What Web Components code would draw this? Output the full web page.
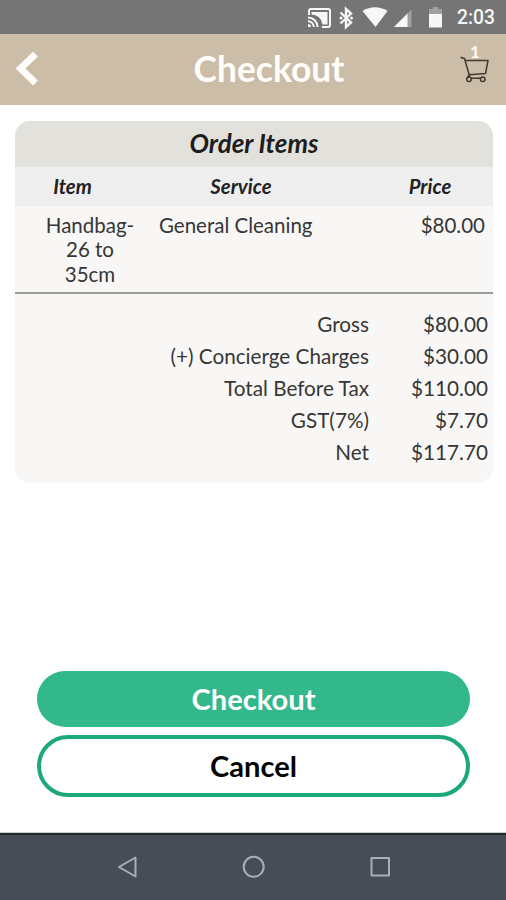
<!DOCTYPE html>
<html lang="en">
<head>
<meta charset="utf-8">
<title>Checkout</title>
<style>
html,body{margin:0;height:900px;overflow:hidden;background:#fff}
body{font-family:Lato,"Liberation Sans",sans-serif;color:#363636}
</style>
</head>
<body>
<checkout-app></checkout-app>
<script>
const define = (name, html) => customElements.define(name, class extends HTMLElement {
  constructor() {
    super();
    const t = document.createElement('template');
    t.innerHTML = html;
    this.attachShadow({mode: 'open'}).append(t.content.cloneNode(true));
  }
});

define('status-bar', `<style>
:host{display:block;height:34px;background:#757575;color:#f7f7f7;font:500 19.300px/36px Roboto,sans-serif}
.row{display:grid;grid-template-columns:150px 39px;justify-content:end;padding-right:11px;height:34px}
.time{text-align:right;white-space:nowrap}
svg{display:block}
</style><div class="row">
<svg width="150" height="34" viewBox="306 0 150 34" fill="#f7f7f7">
<path d="M309 15V11q0-2 2-2h17q2 0 2 2v14q0 2-2 2h-6" fill="none" stroke="#f7f7f7" stroke-width="2"/>
<path d="M311.500 12H327.500V24.500H322.500A11 11 0 0 0 311.500 14.500Z"/>
<path d="M308 17.500a9.500 9.500 0 0 1 9.500 9.500M308 21.200a5.800 5.800 0 0 1 5.800 5.800" fill="none" stroke="#f7f7f7" stroke-width="2"/>
<path d="M308 24a3 3 0 0 1 3 3h-3Z"/>
<path d="M340.500 12.500 351 22.500 346 27V9L351 13.500 340.500 23.500" fill="none" stroke="#f7f7f7" stroke-width="2.400"/>
<circle cx="341" cy="18" r="1.500"/><circle cx="351.500" cy="18" r="1.500"/>
<path d="M362.500 11Q375 3.500 387.500 11L375.500 27Z"/>
<path d="M394 27 411.500 9.500V27Z" fill="#a0a0a0"/><path d="M394 27 407.500 13.500V27Z"/>
<path d="M433 7h5v2h4v5H429V9h4Z" fill="#a0a0a0"/><path d="M429 14h13v13.500H429Z"/>
</svg><span class="time">2:03</span></div>`);

define('title-bar', `<style>
:host{display:grid;grid-template-columns:60px 1fr 60px;height:71px;background:#ccbda8;color:#fffefa;align-items:start}
h1{margin:0;padding-left:32px;font:700 35.400px/70px Lato,sans-serif;text-align:center;white-space:nowrap}
.cart{position:relative;height:71px}
.count{position:absolute;left:24px;top:7px;font:700 17px/22px Lato,sans-serif}
svg{display:block}
</style>
<svg width="60" height="71" viewBox="0 34 60 71"><path d="M35.500 54 20.500 68.500 35.500 83" fill="none" stroke="#fffefa" stroke-width="6.800"/></svg>
<h1><slot></slot></h1>
<div class="cart"><svg width="60" height="71" viewBox="446 34 60 71" fill="none" stroke="#44392f" stroke-width="1.500" stroke-linecap="round" stroke-linejoin="round">
<path d="M461 57.500 464.500 58.500 469.500 76M465.500 60.500H488L485.500 73.500 469 74.800M469 74.800 467.500 77.500M471.500 78.300H480.500"/><circle cx="469" cy="79.300" r="2.300"/><circle cx="482.700" cy="79.300" r="2.300"/></svg><span class="count">1</span></div>`);

define('order-line', `<style>
:host{display:grid;grid-template-columns:138px 1fr 110px;box-sizing:border-box;height:88px;padding:7px 8px 0 0;font-size:20.500px;line-height:24.400px;border-bottom:2px solid #9b9b99}
.item{width:92px;margin-left:29px;text-align:center}
.service{padding-left:6px}
.price{text-align:right}
</style><div class="item"><slot name="item"></slot></div><div class="service"><slot name="service"></slot></div><div class="price"><slot name="price"></slot></div>`);

define('total-line', `<style>
:host{display:grid;grid-template-columns:1fr 119px;height:32.100px;padding-right:5px;font-size:20.700px;line-height:32px;text-align:right;white-space:nowrap}
</style><span><slot name="label"></slot></span><span><slot name="amount"></slot></span>`);

define('order-card', `<style>
:host{display:block;margin:16px 13px 0 15px;height:362px;border-radius:15px;overflow:hidden;background:#f8f7f5}
h2{margin:0;height:46px;background:#e3e1dc;font:italic 700 25.900px/44px Lato,sans-serif;text-align:center;color:#1d1d1d}
.cols{display:grid;grid-template-columns:115px 222px 156px;height:39px;background:#eee;font:italic 700 20.300px/38px Lato,sans-serif;text-align:center;color:#222}
.totals{padding-top:14px}
</style><h2>Order Items</h2><div class="cols"><span>Item</span><span>Service</span><span>Price</span></div>
<slot name="lines"></slot><div class="totals"><slot></slot></div>`);

define('pill-button', `<style>
:host{display:flex;box-sizing:border-box;align-items:center;justify-content:center;height:56px;border-radius:31px;background:#32b88a;color:#fff;font:700 29.100px/34px Lato,sans-serif}
:host([outline]){height:62px;margin-top:8px;border:4px solid #1ba978;background:#fff;color:#050505}
</style><slot></slot>`);

define('nav-bar', `<style>
:host{display:block;box-sizing:border-box;height:67px;background:#464d56;border-top:2px solid #1d2b2d;box-shadow:0 -1px #ccc}
svg{display:block}
</style><svg width="506" height="65" viewBox="0 835 506 65" fill="none" stroke="#a9afb3" stroke-width="2" stroke-linejoin="round">
<path d="M135.500 857.500V876.500L119 867Z"/><circle cx="253.700" cy="866.800" r="10"/><rect x="371.500" y="858" width="17.500" height="17.500"/></svg>`);

define('checkout-app', `<style>
:host{display:flex;flex-direction:column;width:506px;height:900px;background:#fff}
.actions{margin:auto 36px 36px 37px}
</style>
<status-bar></status-bar><title-bar>Checkout</title-bar>
<order-card>
<order-line slot="lines"><span slot="item">Handbag-26 to 35cm</span><span slot="service">General Cleaning</span><span slot="price">$80.00</span></order-line>
<total-line><span slot="label">Gross</span><span slot="amount">$80.00</span></total-line>
<total-line><span slot="label">(+) Concierge Charges</span><span slot="amount">$30.00</span></total-line>
<total-line><span slot="label">Total Before Tax</span><span slot="amount">$110.00</span></total-line>
<total-line><span slot="label">GST(7%)</span><span slot="amount">$7.70</span></total-line>
<total-line><span slot="label">Net</span><span slot="amount">$117.70</span></total-line>
</order-card>
<div class="actions"><pill-button>Checkout</pill-button><pill-button outline>Cancel</pill-button></div>
<nav-bar></nav-bar>`);
</script>
</body>
</html>
